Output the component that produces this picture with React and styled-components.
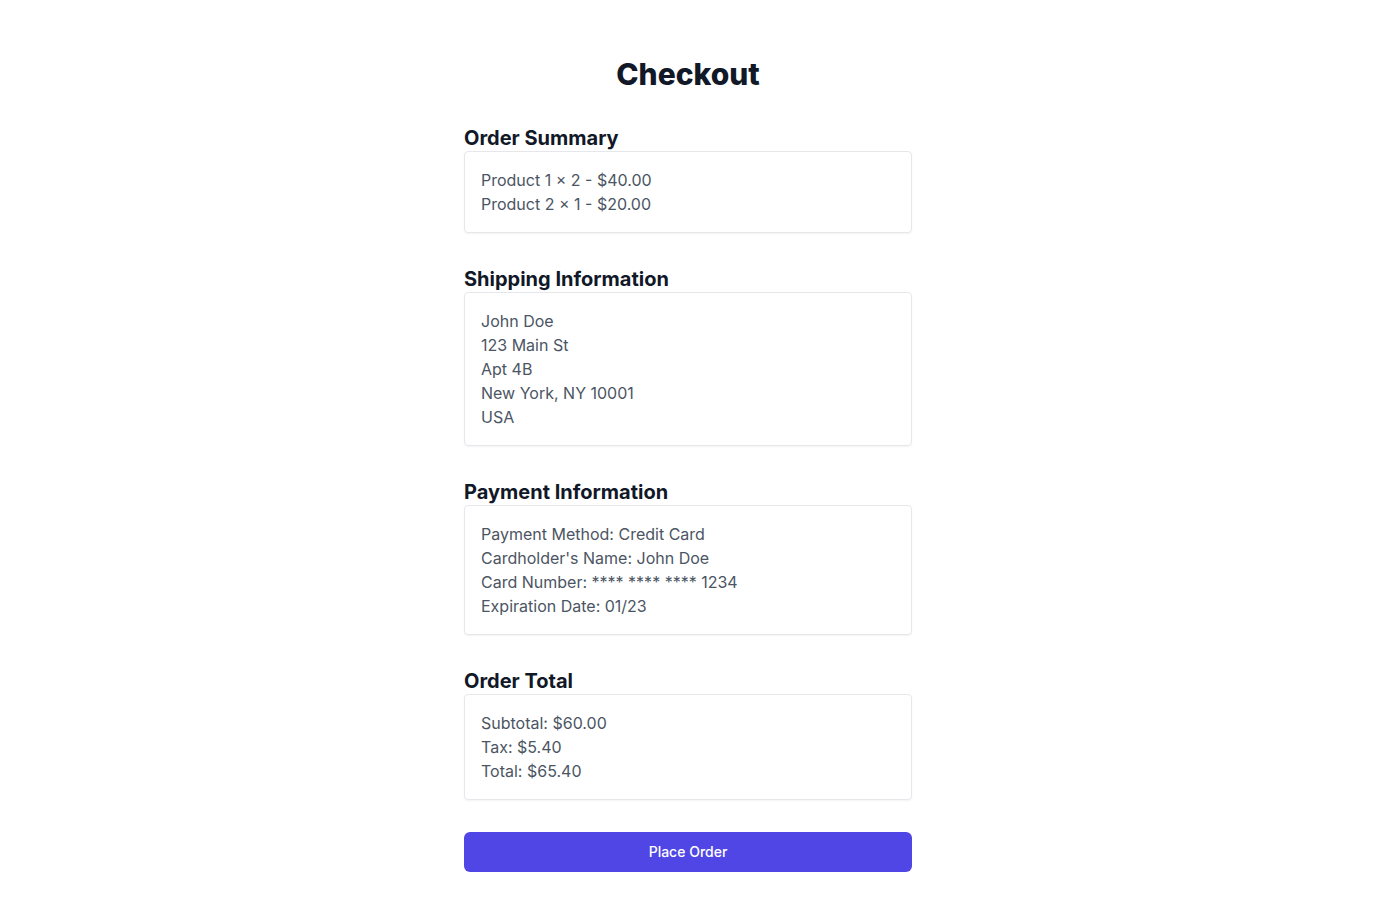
import styled, { createGlobalStyle } from 'styled-components'

const GlobalStyle = createGlobalStyle`
    body {
        margin: 0;
        background: #ffffff;
        font-family: Inter, "Noto Sans", sans-serif;
    }
`

const sections = [
    { title: 'Order Summary', lines: ['Product 1 × 2 - $40.00', 'Product 2 × 1 - $20.00'] },
    { title: 'Shipping Information', lines: ['John Doe', '123 Main St', 'Apt 4B', 'New York, NY 10001', 'USA'] },
    {
        title: 'Payment Information',
        lines: [
            'Payment Method: Credit Card',
            "Cardholder's Name: John Doe",
            'Card Number: **** **** **** 1234',
            'Expiration Date: 01/23',
        ],
    },
    { title: 'Order Total', lines: ['Subtotal: $60.00', 'Tax: $5.40', 'Total: $65.40'] },
]

function App() {
    return (
        <>
            <GlobalStyle />
            <Page>
                <Container>
                    <Title>Checkout</Title>
                    {sections.map((s) => (
                        <Section key={s.title}>
                            <Heading>{s.title}</Heading>
                            <Card>
                                {s.lines.map((l) => (
                                    <Line key={l}>{l}</Line>
                                ))}
                            </Card>
                        </Section>
                    ))}
                    <Button>Place Order</Button>
                </Container>
            </Page>
        </>
    )
}

export default App

const Page = styled.div`
    display: flex;
    justify-content: center;
    padding: 56px 16px 32px;
`

const Container = styled.div`
    width: 448px;
    display: flex;
    flex-direction: column;
`

const Title = styled.h1`
    margin: 0 0 32px;
    text-align: center;
    font-size: 30px;
    line-height: 36px;
    font-weight: 800;
    color: #111827;
`

const Section = styled.section`
    margin-bottom: 32px;
`

const Heading = styled.h2`
    margin: 0;
    padding-top: 1px;
    font-size: 20px;
    line-height: 26px;
    font-weight: 700;
    color: #111827;
`

const Card = styled.div`
    border: 1px solid #e5e7eb;
    border-radius: 4px;
    box-shadow: 0 1px 2px rgba(0, 0, 0, 0.05);
    padding: 16px;
`

const Line = styled.p`
    margin: 0;
    font-size: 16px;
    line-height: 24px;
    color: #4b5563;
`

const Button = styled.button`
    height: 40px;
    padding: 0 0 1px;
    border: none;
    border-radius: 6px;
    background: #4f46e5;
    color: #ffffff;
    font-family: Inter, "Noto Sans", sans-serif;
    font-size: 14px;
    font-weight: 500;
    cursor: pointer;
`
